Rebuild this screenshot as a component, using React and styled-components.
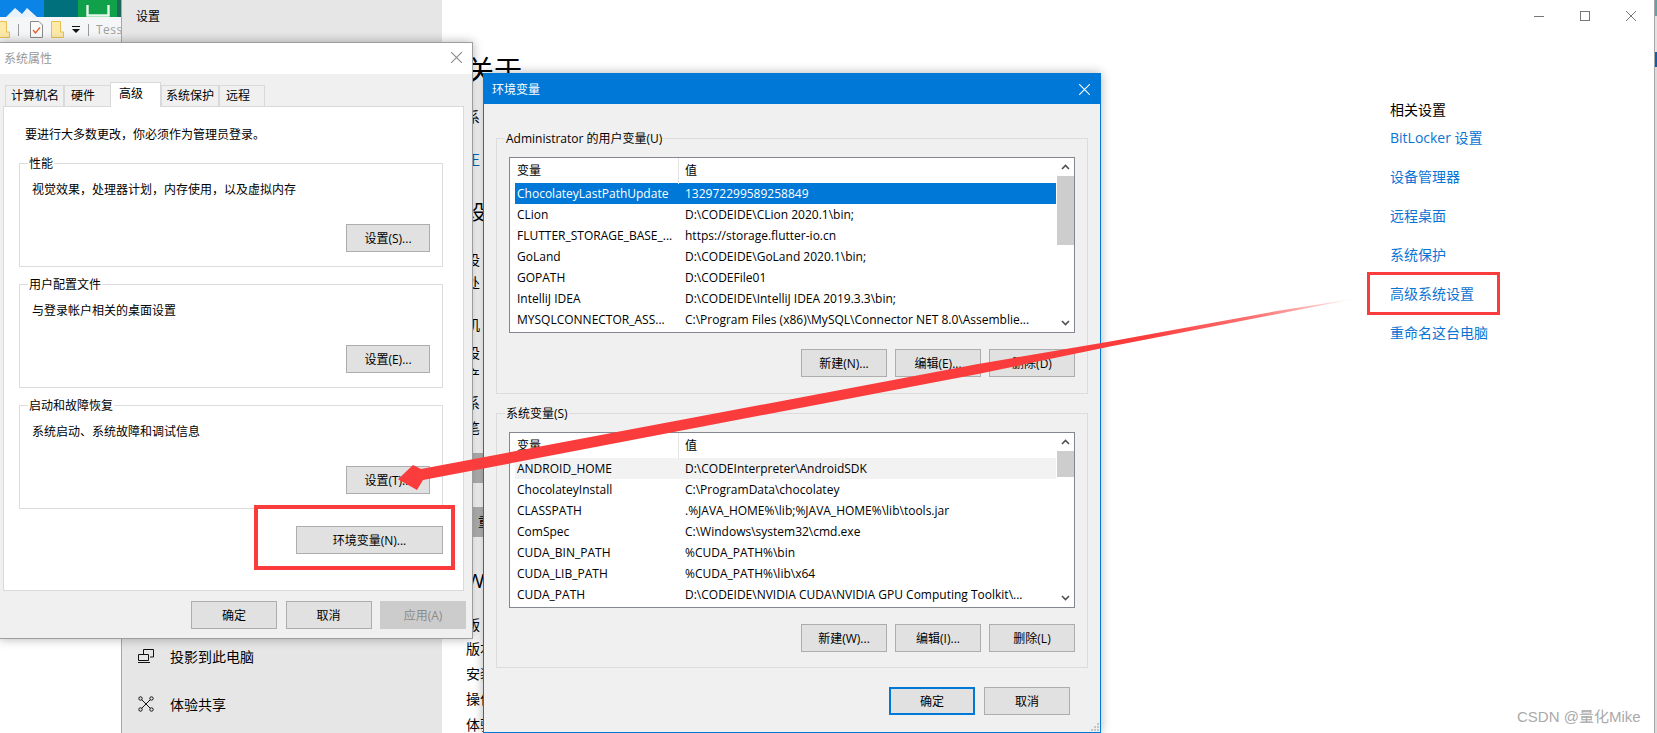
import React from "react";
import styled, { createGlobalStyle } from "styled-components";

const GlobalStyle = createGlobalStyle`
  html, body {
    margin: 0;
    padding: 0;
    background: #fff;
  }
  body {
    font-family: "Open Sans", "Noto Sans CJK SC", sans-serif;
    font-size: 12px;
    color: #000;
  }
`;

const userVars = [
  ["ChocolateyLastPathUpdate", "132972299589258849"],
  ["CLion", "D:\\CODEIDE\\CLion 2020.1\\bin;"],
  ["FLUTTER_STORAGE_BASE_...", "https://storage.flutter-io.cn"],
  ["GoLand", "D:\\CODEIDE\\GoLand 2020.1\\bin;"],
  ["GOPATH", "D:\\CODEFile01"],
  ["IntelliJ IDEA", "D:\\CODEIDE\\IntelliJ IDEA 2019.3.3\\bin;"],
  ["MYSQLCONNECTOR_ASS...", "C:\\Program Files (x86)\\MySQL\\Connector NET 8.0\\Assemblie..."],
];

const systemVars = [
  ["ANDROID_HOME", "D:\\CODEInterpreter\\AndroidSDK"],
  ["ChocolateyInstall", "C:\\ProgramData\\chocolatey"],
  ["CLASSPATH", ".%JAVA_HOME%\\lib;%JAVA_HOME%\\lib\\tools.jar"],
  ["ComSpec", "C:\\Windows\\system32\\cmd.exe"],
  ["CUDA_BIN_PATH", "%CUDA_PATH%\\bin"],
  ["CUDA_LIB_PATH", "%CUDA_PATH%\\lib\\x64"],
  ["CUDA_PATH", "D:\\CODEIDE\\NVIDIA CUDA\\NVIDIA GPU Computing Toolkit\\..."],
];

// the about page only shows through in the gap between the two dialogs,
// so just the first characters of each line are kept
const aboutLines = [
  { text: "关于", h: 28, size: 28, gap: 0 },
  { text: "系", h: 20, size: 14, gap: 23 },
  { text: "正", h: 20, size: 14, gap: 23, link: true },
  { text: "设", h: 28, size: 20, gap: 29 },
  { text: "设", h: 20, size: 14, gap: 23 },
  { text: "处", h: 20, size: 14, gap: 3 },
  { text: "机", h: 20, size: 14, gap: 22 },
  { text: "设", h: 20, size: 14, gap: 8 },
  { text: "产", h: 20, size: 14, gap: 2 },
  { text: "系", h: 20, size: 14, gap: 8 },
  { text: "笔", h: 20, size: 14, gap: 5 },
  { text: "", h: 30, size: 14, gap: 15, band: true },
  { text: "重", h: 30, size: 14, gap: 24, band: true },
  { text: "W", h: 28, size: 20, gap: 30 },
  { text: "版", h: 20, size: 14, gap: 20 },
  { text: "版本", h: 20, size: 14, gap: 4 },
  { text: "安装", h: 20, size: 14, gap: 5 },
  { text: "操作", h: 20, size: 14, gap: 5 },
  { text: "体验", h: 20, size: 14, gap: 6 },
];

const relatedLinks = ["BitLocker 设置", "设备管理器", "远程桌面", "系统保护", "高级系统设置", "重命名这台电脑"];

const CloseIcon = ({ size = 10, color = "#777" }) => (
  <svg width={size} height={size} viewBox="0 0 10 10">
    <path d="M0 0 L10 10 M10 0 L0 10" stroke={color} strokeWidth="1" fill="none" />
  </svg>
);

const FolderIcon = () => (
  <IconSvg width="13" height="17" viewBox="0 0 13 17">
    <path d="M.5.5 H9.5 V11 H12.5 V16.5 H.5 Z" fill="#fde9a8" stroke="#e8c04f" />
  </IconSvg>
);

const TaskIcon = () => (
  <IconSvg width="13" height="17" viewBox="0 0 13 17">
    <path d="M.5.5 H9 L12.5 4 V16.5 H.5 Z" fill="#fafafa" stroke="#8a8a8a" />
    <path d="M3 9 L5.5 12 L10 6.5" fill="none" stroke="#e8622a" strokeWidth="1.4" />
  </IconSvg>
);

const ProjectIcon = () => (
  <svg width="16" height="14" viewBox="0 0 16 14">
    <path
      d="M5.5 5 V.5 H15.5 V8 H12 M.5 5.5 H10.5 V11.5 H.5 Z M0 13.5 H12"
      fill="none"
      stroke="#111"
      strokeWidth="1"
    />
  </svg>
);

const ShareIcon = () => (
  <svg width="16" height="16" viewBox="0 0 16 16">
    <g fill="none" stroke="#111" strokeWidth="1">
      <circle cx="2.5" cy="2.5" r="1.7" />
      <circle cx="13.5" cy="2.5" r="1.7" />
      <circle cx="2.5" cy="13.5" r="1.7" />
      <circle cx="13.5" cy="13.5" r="1.7" />
      <path d="M3.8 3.8 L12.2 12.2 M12.2 3.8 L3.8 12.2" />
    </g>
  </svg>
);

const Chevron = ({ down }) => (
  <svg width="9" height="6" viewBox="0 0 9 6">
    <path
      d={down ? "M1 1 L4.5 4.5 L8 1" : "M1 5 L4.5 1.5 L8 5"}
      fill="none"
      stroke="#505050"
      strokeWidth="1.6"
    />
  </svg>
);

function VarList({ rows, selected, hovered, thumbHeight }) {
  return (
    <ListBox>
      <ListMain>
        <ListHead>
          <HeadCell>变量</HeadCell>
          <HeadCell $value>值</HeadCell>
        </ListHead>
        {rows.map(([name, value], i) => (
          <ListRow key={name} $selected={selected === i} $hovered={hovered === i}>
            <span>{name}</span>
            <span>{value}</span>
          </ListRow>
        ))}
      </ListMain>
      <ScrollBar>
        <ScrollArrow>
          <Chevron />
        </ScrollArrow>
        <ScrollThumb $h={thumbHeight} />
        <ScrollTrack />
        <ScrollArrow>
          <Chevron down />
        </ScrollArrow>
      </ScrollBar>
    </ListBox>
  );
}

function App() {
  return (
    <>
      <GlobalStyle />
      <Desktop>
        <Explorer>
          <TileStrip>
            <Tile $bg="#0a84e6">
              <svg width="44" height="17" viewBox="0 0 44 17">
                <path d="M6 17 L15 8 L22 14 L27 8 L37 17 Z" fill="#e8f2fb" />
              </svg>
            </Tile>
            <Tile $bg="#00707c" $w={34} />
            <Tile $bg="#12a14b" $w={39}>
              <svg width="39" height="17" viewBox="0 0 39 17">
                <path d="M9.5 5 V15.5 H30.5 V5" fill="none" stroke="#e8f6ec" strokeWidth="2.4" />
              </svg>
            </Tile>
            <Tile $bg="#1c6b58" $w={5} />
          </TileStrip>
          <QuickBar>
            <FolderIcon />
            <QuickSep />
            <TaskIcon />
            <FolderIcon />
            <DropMark />
            <QuickSep />
            <QuickText>Tess</QuickText>
          </QuickBar>
        </Explorer>

        <SettingsWindow>
          <Sidebar>
            <SideTitle>设置</SideTitle>
            <SideNav>
              <SideItem>
                <SideIcon>
                  <ProjectIcon />
                </SideIcon>
                投影到此电脑
              </SideItem>
              <SideItem>
                <SideIcon>
                  <ShareIcon />
                </SideIcon>
                体验共享
              </SideItem>
            </SideNav>
          </Sidebar>
          <AboutPage>
            {aboutLines.map((line, i) => (
              <AboutLine
                key={i}
                $h={line.h}
                $size={line.size}
                $gap={line.gap}
                $link={line.link}
                $band={line.band}
              >
                {line.text}
              </AboutLine>
            ))}
          </AboutPage>
          <Related>
            <Controls>
              <ControlBox>
                <MinimizeMark />
              </ControlBox>
              <ControlBox>
                <MaximizeMark />
              </ControlBox>
              <ControlBox>
                <CloseIcon />
              </ControlBox>
            </Controls>
            <RelatedTitle>相关设置</RelatedTitle>
            {relatedLinks.map((text) => (
              <RelatedLink key={text}>{text}</RelatedLink>
            ))}
          </Related>
        </SettingsWindow>

        <EdgeStrip>
          <EdgeBlock $h={16} $bg="#5fa3a8" />
          <EdgeBlock $h={36} $bg="#e4e4e4" />
          <EdgeBlock $h={15} $bg="#0b5fb0" />
          <EdgeBlock $h={666} $bg="#dcdcdc" />
        </EdgeStrip>

        <SystemDialog>
          <SystemTitle>
            <span>系统属性</span>
            <CloseIcon size={11} color="#8a8a8a" />
          </SystemTitle>
          <Tabs>
            <Tab $w={59} $pad={5}>计算机名</Tab>
            <Tab $w={47} $pad={6}>硬件</Tab>
            <Tab $w={51} $pad={8} $active>
              高级
            </Tab>
            <Tab $w={58} $pad={4}>系统保护</Tab>
            <Tab $w={46} $pad={6}>远程</Tab>
          </Tabs>
          <TabPanel>
            <Intro>要进行大多数更改，你必须作为管理员登录。</Intro>
            <Group>
              <Legend>性能</Legend>
              <GroupText>视觉效果，处理器计划，内存使用，以及虚拟内存</GroupText>
              <GroupButton>设置(S)...</GroupButton>
            </Group>
            <Group>
              <Legend>用户配置文件</Legend>
              <GroupText>与登录帐户相关的桌面设置</GroupText>
              <GroupButton>设置(E)...</GroupButton>
            </Group>
            <Group>
              <Legend>启动和故障恢复</Legend>
              <GroupText>系统启动、系统故障和调试信息</GroupText>
              <GroupButton>设置(T)...</GroupButton>
            </Group>
            <EnvButton>环境变量(N)...</EnvButton>
          </TabPanel>
          <SystemFooter>
            <Button>确定</Button>
            <Button>取消</Button>
            <Button $disabled>应用(A)</Button>
          </SystemFooter>
        </SystemDialog>

        <EnvDialog>
          <EnvTitle>
            <span>环境变量</span>
            <CloseIcon size={11} color="#fff" />
          </EnvTitle>
          <EnvBody>
            <VarGroup $h={256}>
              <VarLegend>Administrator 的用户变量(U)</VarLegend>
              <VarList rows={userVars} selected={0} thumbHeight={69} />
              <VarButtons>
                <Button>新建(N)...</Button>
                <Button>编辑(E)...</Button>
                <Button>删除(D)</Button>
              </VarButtons>
            </VarGroup>
            <VarGroup $h={255}>
              <VarLegend>系统变量(S)</VarLegend>
              <VarList rows={systemVars} hovered={0} thumbHeight={26} />
              <VarButtons>
                <Button>新建(W)...</Button>
                <Button>编辑(I)...</Button>
                <Button>删除(L)</Button>
              </VarButtons>
            </VarGroup>
            <EnvFooter>
              <Button $focused>确定</Button>
              <Button>取消</Button>
            </EnvFooter>
          </EnvBody>
          <ResizeGrip viewBox="0 0 8 8" width="8" height="8">
            <path d="M6 0h2v2H6zM3 3h2v2H3zM6 3h2v2H6zM0 6h2v2H0zM3 6h2v2H3zM6 6h2v2H6z" fill="#c4c4c4" />
          </ResizeGrip>
        </EnvDialog>

        <ArrowLayer width="1657" height="733" viewBox="0 0 1657 733">
          <defs>
            <linearGradient id="arrowFade" gradientUnits="userSpaceOnUse" x1="1356" y1="0" x2="400" y2="0">
              <stop offset="0" stopColor="#fb3c3c" stopOpacity="0.05" />
              <stop offset="0.1" stopColor="#fb3c3c" stopOpacity="0.7" />
              <stop offset="0.22" stopColor="#fb3c3c" stopOpacity="1" />
            </linearGradient>
          </defs>
          <path
            d="M1356 298.5 L1280 310.5 L1110 341.5 L978 364 L421 469 L413 465 L398 479.3 L417 490 L423 480 L978 374 L1110 346.5 L1280 313.5 Z"
            fill="url(#arrowFade)"
          />
        </ArrowLayer>

        <Callout $x={254} $y={505} $w={201} $h={65} $line={4} />
        <Callout $x={1367} $y={272} $w={133} $h={43} $line={3} />
        <Watermark>CSDN @量化Mike</Watermark>
      </Desktop>
    </>
  );
}

export default App;

const Desktop = styled.div`
  position: relative;
  width: 1657px;
  height: 733px;
  overflow: hidden;
  background: #fff;
`;

const Explorer = styled.div`
  position: absolute;
  left: 0;
  top: 0;
  width: 122px;
  height: 42px;
  display: flex;
  flex-direction: column;
  background: #f5f6f7;
  overflow: hidden;
`;

const TileStrip = styled.div`
  display: flex;
  height: 17px;
  flex: none;
`;

const Tile = styled.div`
  width: ${(p) => p.$w || 44}px;
  flex: none;
  background: ${(p) => p.$bg};
  svg {
    display: block;
  }
`;

const QuickBar = styled.div`
  display: flex;
  align-items: center;
  height: 25px;
  margin-left: -3px;
  gap: 8px;
  white-space: nowrap;
`;

const IconSvg = styled.svg`
  flex: none;
`;

const QuickSep = styled.div`
  flex: none;
  width: 1px;
  height: 12px;
  background: #9a9a9a;
  margin-right: 3px;
`;

const DropMark = styled.div`
  flex: none;
  width: 8px;
  height: 6px;
  border-top: 1px solid #111;
  position: relative;
  &:after {
    content: "";
    position: absolute;
    left: 0;
    top: 2px;
    border: 4px solid transparent;
    border-top: 4px solid #111;
    border-bottom: 0;
  }
`;

const QuickText = styled.span`
  margin-left: -4px;
  color: #a0a0a0;
  font-size: 12px;
  letter-spacing: 0.5px;
`;

const SettingsWindow = styled.div`
  position: absolute;
  left: 121px;
  top: 0;
  width: 1534px;
  height: 733px;
  box-sizing: border-box;
  display: flex;
  background: #fff;
  border-left: 1px solid #a6a6a6;
  border-right: 1px solid #a6a6a6;
`;

const Sidebar = styled.div`
  width: 320px;
  flex: none;
  display: flex;
  flex-direction: column;
  background: #e6e6e6;
`;

const SideTitle = styled.div`
  height: 34px;
  line-height: 34px;
  padding-left: 14px;
`;

const SideNav = styled.nav`
  margin-top: auto;
  padding-bottom: 5px;
`;

const SideItem = styled.div`
  display: flex;
  align-items: center;
  height: 48px;
  padding-left: 16px;
  font-size: 14px;
`;

const SideIcon = styled.span`
  display: flex;
  align-items: center;
  justify-content: center;
  width: 16px;
  margin-right: 16px;
`;

const AboutPage = styled.div`
  flex: 1;
  padding: 56px 0 0 24px;
  overflow: hidden;
`;

const AboutLine = styled.div`
  height: ${(p) => p.$h}px;
  line-height: ${(p) => p.$h}px;
  margin-top: ${(p) => p.$gap}px;
  font-size: ${(p) => p.$size}px;
  white-space: nowrap;
  color: ${(p) => (p.$link ? "#0067c0" : "#000")};
  ${(p) =>
    p.$band &&
    `
    width: 130px;
    padding-left: 12px;
    background: #b8b8b8;
  `}
`;

const Related = styled.aside`
  width: 264px;
  flex: none;
`;

const Controls = styled.div`
  display: flex;
  justify-content: flex-end;
  height: 32px;
  margin-bottom: 69px;
`;

const ControlBox = styled.div`
  display: flex;
  align-items: center;
  justify-content: center;
  width: 46px;
`;

const MinimizeMark = styled.div`
  width: 10px;
  height: 1px;
  background: #777;
`;

const MaximizeMark = styled.div`
  width: 8px;
  height: 8px;
  border: 1px solid #777;
`;

const RelatedTitle = styled.div`
  height: 17px;
  line-height: 18px;
  font-size: 14px;
`;

const RelatedLink = styled.div`
  height: 39px;
  line-height: 39px;
  font-size: 14px;
  color: #0a74d4;
  white-space: nowrap;
`;

const EdgeStrip = styled.div`
  position: absolute;
  right: 0;
  top: 0;
  width: 2px;
`;

const EdgeBlock = styled.div`
  height: ${(p) => p.$h}px;
  background: ${(p) => p.$bg};
`;

const Watermark = styled.div`
  position: absolute;
  left: 1517px;
  top: 708px;
  line-height: 18px;
  font-family: "Liberation Sans", "Noto Sans CJK SC", sans-serif;
  font-size: 15px;
  color: #aaa;
  white-space: nowrap;
`;

const SystemDialog = styled.div`
  position: absolute;
  left: -1px;
  top: 42px;
  width: 474px;
  height: 597px;
  box-sizing: border-box;
  display: flex;
  flex-direction: column;
  background: #f0f0f0;
  border: 1px solid #9e9e9e;
  box-shadow: 0 0 10px rgba(0, 0, 0, 0.3);
`;

const SystemTitle = styled.div`
  display: flex;
  align-items: center;
  justify-content: space-between;
  flex: none;
  height: 29px;
  padding: 0 10px 2px 4px;
  background: #fff;
  color: #999;
`;

const Tabs = styled.div`
  display: flex;
  align-items: flex-end;
  height: 23px;
  padding: 10px 0 0 5px;
  position: relative;
  z-index: 1;
  margin-bottom: -1px;
`;

const Tab = styled.div`
  width: ${(p) => p.$w}px;
  height: ${(p) => (p.$active ? 25 : 22)}px;
  box-sizing: border-box;
  padding-left: ${(p) => p.$pad}px;
  line-height: ${(p) => (p.$active ? 22 : 20)}px;
  border: 1px solid #d9d9d9;
  border-bottom: ${(p) => (p.$active ? "0" : "1px solid #d9d9d9")};
  margin-left: ${(p) => (p.$active ? -1 : 0)}px;
  background: ${(p) => (p.$active ? "#fff" : "#f0f0f0")};
  white-space: nowrap;
`;

const TabPanel = styled.div`
  display: flex;
  flex-direction: column;
  flex: none;
  width: 461px;
  height: 485px;
  margin-left: 3px;
  box-sizing: border-box;
  padding: 19px 20px 0 15px;
  background: #fff;
  border: 1px solid #d9d9d9;
`;

const Intro = styled.div`
  height: 18px;
  line-height: 18px;
  margin: 0 0 19px 6px;
`;

const Group = styled.div`
  position: relative;
  display: flex;
  flex-direction: column;
  box-sizing: border-box;
  flex: none;
  height: 104px;
  margin-bottom: 17px;
  padding: 17px 12px 14px 12px;
  border: 1px solid #dcdcdc;
`;

const Legend = styled.div`
  position: absolute;
  left: 8px;
  top: -8px;
  padding: 0 1px;
  line-height: 16px;
  background: #fff;
`;

const GroupText = styled.div`
  height: 18px;
  line-height: 18px;
`;

const Button = styled.button`
  width: 86px;
  height: 28px;
  box-sizing: border-box;
  padding: 0;
  font: inherit;
  color: ${(p) => (p.$disabled ? "#8a8a8a" : "#000")};
  background: ${(p) => (p.$disabled ? "#cccccc" : "#e1e1e1")};
  border: ${(p) => (p.$focused ? "2px solid #0078d7" : p.$disabled ? "1px solid #cccccc" : "1px solid #adadad")};
  white-space: nowrap;
`;

const GroupButton = styled(Button)`
  width: 84px;
  margin-top: auto;
  align-self: flex-end;
`;

const EnvButton = styled(Button)`
  width: 147px;
  margin-top: 0;
  align-self: flex-end;
`;

const SystemFooter = styled.div`
  display: flex;
  justify-content: flex-end;
  gap: 8.5px;
  padding: 10px 6px 0 0;
`;

const EnvDialog = styled.div`
  position: absolute;
  left: 483px;
  top: 73px;
  width: 618px;
  height: 660px;
  box-sizing: border-box;
  background: #f0f0f0;
  border: 1px solid #0078d7;
  box-shadow: 0 0 10px rgba(0, 0, 0, 0.3);
`;

const EnvTitle = styled.div`
  display: flex;
  align-items: center;
  justify-content: space-between;
  height: 30px;
  padding: 0 10px 0 8px;
  background: #0078d7;
  color: #fff;
`;

const EnvBody = styled.div`
  padding: 34px 12px 0 12px;
`;

const VarGroup = styled.div`
  position: relative;
  display: flex;
  flex-direction: column;
  height: ${(p) => p.$h}px;
  box-sizing: border-box;
  margin-bottom: 19px;
  padding: 18px 12px 0 12px;
  border: 1px solid #dcdcdc;
`;

const VarLegend = styled.div`
  position: absolute;
  left: 8px;
  top: -8px;
  padding: 0 1px;
  line-height: 16px;
  background: #f0f0f0;
`;

const ListBox = styled.div`
  display: flex;
  height: 176px;
  box-sizing: border-box;
  padding-left: 5px;
  background: #fff;
  border: 1px solid #828790;
`;

const ListMain = styled.div`
  flex: 1;
  min-width: 0;
`;

const ListHead = styled.div`
  display: grid;
  grid-template-columns: 163px 1fr;
  height: 25px;
`;

const HeadCell = styled.div`
  line-height: 26px;
  padding-left: ${(p) => (p.$value ? 6 : 2)}px;
  border-left: ${(p) => (p.$value ? "1px solid #e5e5e5" : "0")};
`;

const ListRow = styled.div`
  display: grid;
  grid-template-columns: 168px 1fr;
  height: 21px;
  line-height: 21px;
  padding-left: 2px;
  white-space: nowrap;
  color: ${(p) => (p.$selected ? "#fff" : "#000")};
  background: ${(p) => (p.$selected ? "#0078d7" : p.$hovered ? "#f2f2f2" : "transparent")};
`;

const ScrollBar = styled.div`
  display: flex;
  flex-direction: column;
  width: 17px;
  flex: none;
  margin-left: 1px;
`;

const ScrollArrow = styled.div`
  display: flex;
  align-items: center;
  justify-content: center;
  height: 18px;
  flex: none;
`;

const ScrollThumb = styled.div`
  height: ${(p) => p.$h}px;
  background: #cdcdcd;
  flex: none;
`;

const ScrollTrack = styled.div`
  flex: 1;
`;

const VarButtons = styled.div`
  display: flex;
  justify-content: flex-end;
  gap: 8px;
  margin-top: 16px;
`;

const EnvFooter = styled.div`
  display: flex;
  justify-content: flex-end;
  gap: 9px;
  padding-right: 18px;
`;

const ResizeGrip = styled.svg`
  position: absolute;
  right: 1px;
  bottom: 1px;
`;

const ArrowLayer = styled.svg`
  position: absolute;
  left: 0;
  top: 0;
  pointer-events: none;
`;

const Callout = styled.div`
  position: absolute;
  left: ${(p) => p.$x}px;
  top: ${(p) => p.$y}px;
  width: ${(p) => p.$w}px;
  height: ${(p) => p.$h}px;
  box-sizing: border-box;
  border: ${(p) => p.$line}px solid #fb3c3c;
`;
